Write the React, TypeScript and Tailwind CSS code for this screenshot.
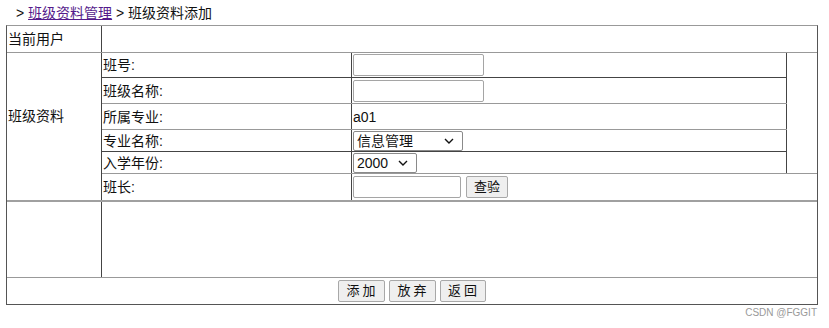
import { ChangeEvent, useState } from "react"

const font = "font-['Liberation_Sans','Noto_Sans_CJK_SC',sans-serif]"

const Chevron = () => (
    <svg width="10" height="6" viewBox="0 0 10 6" className="shrink-0">
        <path d="M1 1l4 4 4-4" fill="none" stroke="#111" strokeWidth="1.4" />
    </svg>
)

// plain native-looking select, chevron drawn beside the field
const Select = ({ width, value, options, onChange }: { width: string; value: string; options: string[]; onChange: (e: ChangeEvent<HTMLSelectElement>) => void }) => (
    <div className={`${width} h-[20px] flex items-center border border-[#8a8a8a] rounded-[2px] bg-white pr-[8px]`}>
        <select value={value} onChange={onChange} className="flex-1 min-w-0 appearance-none bg-transparent pl-[3px] text-[14px] leading-[18px] outline-none">
            {options.map(o => <option key={o} value={o}>{o}</option>)}
        </select>
        <Chevron />
    </div>
)

const Input = ({ width }: { width: string }) => (
    <input className={`${width} h-[22px] border border-[#a5a5a5] rounded-[2px] bg-white px-[2px] text-[14px] outline-none`} />
)

const Btn = ({ label, width, spaced }: { label: string; width: string; spaced?: boolean }) => (
    <button className={`${width} h-[22px] bg-[#efefef] border border-[#a8a8a8] rounded-[2px] text-[13px] leading-[20px] text-[#111] ${spaced ? "tracking-[3px] pl-[3px]" : ""}`}>
        {label}
    </button>
)

const App = () => {
    const [major, setMajor] = useState("信息管理")
    const [year, setYear] = useState("2000")

    const rows: [string, number, React.ReactNode][] = [
        ["班号:", 25, <Input width="w-[131px]" />],
        ["班级名称:", 26, <Input width="w-[131px]" />],
        ["所属专业:", 26, <span>a01</span>],
        ["专业名称:", 22, <Select width="w-[110px]" value={major} options={["信息管理", "计算机科学"]} onChange={e => setMajor(e.target.value)} />],
        ["入学年份:", 22, <Select width="w-[64px]" value={year} options={["2000", "2001", "2002"]} onChange={e => setYear(e.target.value)} />],
    ]

    return (
        <div className={`${font} w-[829px] h-[328px] bg-white text-[14px] text-[#111] leading-[20px]`}>
            {/* Breadcrumb */}
            <div className="h-[25px] pl-[16px] pt-[3px]">
                &gt; <a href="#" className="text-[#551a8b] underline">班级资料管理</a> &gt; 班级资料添加
            </div>

            <div className="ml-[6px] w-[812px] border border-[#555] border-t-[#999]">
                {/* 当前用户 */}
                <div className="flex h-[27px] border-b border-[#999]">
                    <div className="w-[95px] border-r border-[#444] pl-[1px] flex items-center">当前用户</div>
                    <div className="flex-1" />
                </div>

                {/* 班级资料 */}
                <div className="flex border-b-2 border-[#a0a0a0]">
                    <div className="w-[95px] border-r border-[#444] pl-[1px] pt-[53px]">班级资料</div>
                    <div className="flex-1 flex flex-col">
                        <div className="flex">
                            <div className="flex flex-col">
                                {rows.map(([label, h, field], i) => (
                                    <div key={label} style={{ height: h }} className={`flex border-b ${i === 0 || i === 3 ? "border-[#444]" : "border-[#999]"}`}>
                                        <div className="w-[250px] border-r border-[#444] pl-[1px] flex items-center">{label}</div>
                                        <div className="w-[435px] border-r border-[#444] pl-[1px] flex items-center">{field}</div>
                                    </div>
                                ))}
                            </div>
                            <div className="flex-1 border-b border-[#999]" />
                        </div>
                        <div className="flex h-[26px]">
                            <div className="w-[250px] border-r border-[#444] pl-[1px] flex items-center">班长:</div>
                            <div className="flex-1 pl-[1px] flex items-center gap-[5px]">
                                <Input width="w-[108px]" />
                                <Btn label="查验" width="w-[42px]" />
                            </div>
                        </div>
                    </div>
                </div>

                {/* empty area */}
                <div className="flex h-[76px] border-b border-[#999]">
                    <div className="w-[95px] border-r border-[#444]" />
                    <div className="flex-1" />
                </div>

                {/* actions */}
                <div className="h-[26px] flex items-center justify-center gap-[4px] pr-[1px]">
                    <Btn label="添加" width="w-[47px]" spaced />
                    <Btn label="放弃" width="w-[47px]" spaced />
                    <Btn label="返回" width="w-[46px]" spaced />
                </div>
            </div>

            <div className="w-[817px] text-right text-[10px] leading-[12px] text-[#999] mt-[2px] font-['Liberation_Sans',sans-serif]">CSDN @FGGIT</div>
        </div>
    )
}

export default App
